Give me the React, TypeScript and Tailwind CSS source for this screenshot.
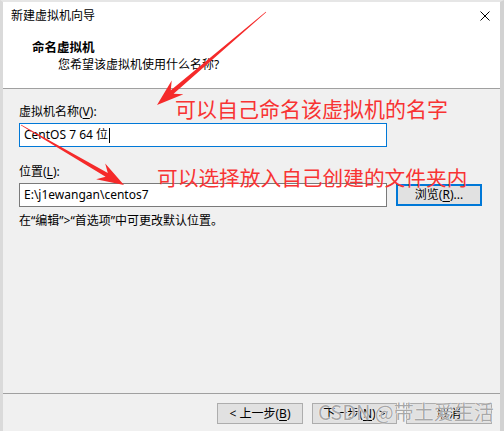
import React from 'react';

const font = { fontFamily: '"Noto Sans", "Noto Sans CJK SC", sans-serif' };
const cjk = { fontFamily: '"Noto Sans CJK SC", sans-serif' };

// tapered brush-style arrow, thin at the start, head at (x2, y2)
function arrowPoints(x1: number, y1: number, x2: number, y2: number) {
  const dx = x2 - x1;
  const dy = y2 - y1;
  const len = Math.hypot(dx, dy);
  const ux = dx / len;
  const uy = dy / len;
  const nx = -uy;
  const ny = ux;
  const neck = 20;
  const back = 27;
  const wing = 9;
  const p = (x: number, y: number) => `${x.toFixed(1)},${y.toFixed(1)}`;
  const nkx = x2 - ux * neck;
  const nky = y2 - uy * neck;
  const bx = x2 - ux * back;
  const by = y2 - uy * back;
  return [
    p(x1 + nx * 0.3, y1 + ny * 0.3),
    p(nkx + nx * 2.2, nky + ny * 2.2),
    p(bx + nx * wing, by + ny * wing),
    p(x2, y2),
    p(bx - nx * wing, by - ny * wing),
    p(nkx - nx * 2.2, nky - ny * 2.2),
    p(x1 - nx * 0.3, y1 - ny * 0.3),
  ].join(' ');
}

function WinButton({ children, focused = false, className = '' }: { children: React.ReactNode; focused?: boolean; className?: string }) {
  return (
    <div
      className={`flex items-center justify-center bg-[#e1e1e1] text-[12px] text-black ${
        focused ? 'border-2 border-[#0078d7]' : 'border border-[#adadad]'
      } ${className}`}
    >
      {children}
    </div>
  );
}

export default function App() {
  return (
    <div className="relative h-[431px] w-[504px] overflow-hidden bg-[#f0f0f0]" style={font}>
      <div className="flex h-full flex-col border-l-[3px] border-r-[4px] border-t-2 border-l-[#dadada] border-r-[#d2d2d2] border-t-[#e6e6e6]">
        {/* header */}
        <div className="relative h-[87px] border-b border-[#a0a0a0] bg-white">
          <div className="pl-[8px] pt-[6px] text-[12px] leading-[16px] text-black">新建虚拟机向导</div>
          <svg className="absolute left-[477px] top-[9px]" width="10" height="10" viewBox="0 0 10 10">
            <path d="M0.5 0.5 L9.5 9.5 M9.5 0.5 L0.5 9.5" stroke="#000" strokeWidth="1" />
          </svg>
          <div className="mt-[16px] pl-[29px] text-[12.5px] font-bold leading-[16px] text-black">命名虚拟机</div>
          <div className="mt-[1px] pl-[55px] text-[12px] leading-[16px] text-black">您希望该虚拟机使用什么名称?</div>
        </div>

        {/* body */}
        <div className="flex-1 pl-[16px]">
          <div className="mt-[15px] text-[12px] leading-[16px] text-black">
            虚拟机名称(<u className="underline-offset-2">V</u>):
          </div>
          <div className="mt-[3px] flex h-[24px] w-[368px] items-center border border-[#0078d7] bg-white pl-[4px] text-[12px] text-black">
            CentOS 7 64 位<span className="ml-[1px] inline-block h-[15px] w-px bg-black" />
          </div>
          <div className="mt-[17px] text-[12px] leading-[16px] text-black">
            位置(<u className="underline-offset-2">L</u>):
          </div>
          <div className="mt-[3px] flex items-center">
            <div className="flex h-[24px] w-[368px] items-center border border-[#7a7a7a] bg-white pl-[4px] text-[12px] text-black">
              E:\j1ewangan\centos7
            </div>
            <WinButton focused className="ml-[9px] h-[22px] w-[86px]">
              浏览(<u className="underline-offset-2">R</u>)...
            </WinButton>
          </div>
          <div className="mt-[6px] text-[12px] leading-[16px] text-black">在“编辑”&gt;“首选项”中可更改默认位置。</div>
        </div>

        {/* footer */}
        <div className="flex h-[38px] justify-end gap-[9px] border-t border-[#a0a0a0] pr-[8px] pt-[9px]">
          <WinButton className="h-[21px] w-[86px]">
            &lt; 上一步(<u className="underline-offset-2">B</u>)
          </WinButton>
          <WinButton className="h-[21px] w-[85px]">
            下一步(<u className="underline-offset-2">N</u>) &gt;
          </WinButton>
          <WinButton className="h-[21px] w-[86px]">取消</WinButton>
        </div>
      </div>

      {/* red annotations */}
      <svg className="pointer-events-none absolute left-0 top-0" width="504" height="431">
        <polygon points={arrowPoints(266, 12, 157, 105)} fill="#f52a2a" />
        <polygon points={arrowPoints(21, 125, 124, 185)} fill="#f52a2a" />
      </svg>
      <div
        className="pointer-events-none absolute left-[175px] top-[95px] whitespace-nowrap text-[21px] leading-[26px] text-[#f83333]"
        style={cjk}
      >
        可以自己命名该虚拟机的名字
      </div>
      <div
        className="pointer-events-none absolute left-[157px] top-[164px] whitespace-nowrap text-[20.7px] leading-[26px] text-[#f83333]"
        style={cjk}
      >
        可以选择放入自己创建的文件夹内
      </div>

      {/* watermark */}
      <div
        className="pointer-events-none absolute left-[318px] top-[399px] whitespace-nowrap text-[20px] leading-[26px] text-[rgba(140,140,140,0.75)]"
        style={{ ...cjk, textShadow: '0 0 1px #ffffff, 0 0 1px #ffffff' }}
      >
        CSDN @带土爱生活
      </div>
    </div>
  );
}
